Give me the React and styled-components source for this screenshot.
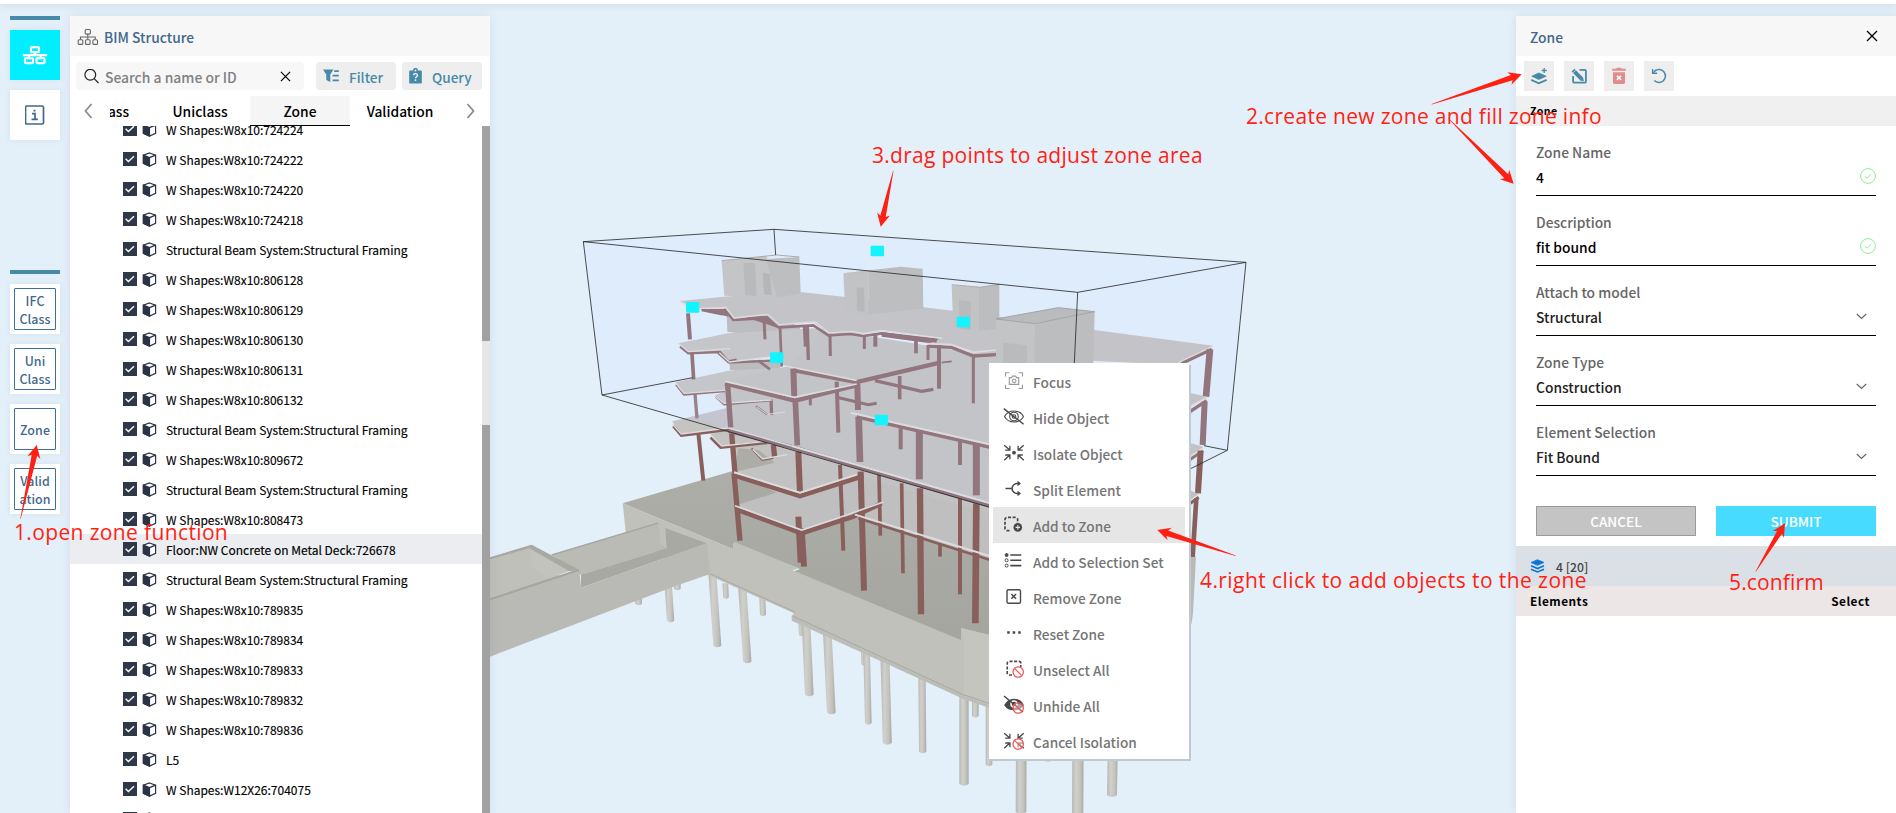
import React from "react";
import styled, { createGlobalStyle } from "styled-components";

const Global = createGlobalStyle`
  * { box-sizing: border-box; }
  body { margin: 0; overflow: hidden; }
`;

const ui = `"Noto Sans CJK SC", "Noto Sans", sans-serif`;

const Page = styled.div`
  position: relative;
  width: 1896px;
  height: 813px;
  overflow: hidden;
  background: #e4f0f9;
  font-family: ${ui};
  font-weight: 500;
  color: #000;
`;
const Scene = styled.svg`
  position: absolute;
  inset: 0;
`;
const TopStrip = styled.div`
  position: relative;
  height: 4px;
  background: #fff;
  box-shadow: 0 1px 8px rgba(60, 100, 140, 0.18);
`;
const Body = styled.div`
  position: relative;
  display: flex;
  height: 809px;
  padding-top: 12px;
`;

/* ---- left rail ---- */
const Rail = styled.nav`
  width: 70px;
  padding: 0 10px;
  display: flex;
  flex-direction: column;
  gap: 10px;
`;
const RailMark = styled.div`
  flex: none;
  height: 4px;
  background: #4689a8;
  margin-top: ${(p) => p.$top || 0}px;
`;
const RailButton = styled.button`
  flex: none;
  width: 50px;
  height: 50px;
  padding: 4px;
  border: 0;
  display: grid;
  place-items: center;
  background: ${(p) => (p.$active ? "#00eeff" : "#fff")};
  box-shadow: 0 0 6px rgba(90, 140, 170, 0.14);
`;
const RailLabel = styled.span`
  display: flex;
  align-items: center;
  justify-content: center;
  width: 42px;
  height: 42px;
  padding-top: 3px;
  border: 1px solid #3f6f98;
  border-radius: 1px;
  font: 500 12.4px/17.4px ${ui};
  letter-spacing: 0.1px;
  color: #41688c;
  white-space: pre;
`;

/* ---- panels ---- */
const Panel = styled.section`
  flex: none;
  width: ${(p) => p.$w}px;
  height: 797px;
  background: #fff;
  box-shadow: 0 0 10px rgba(60, 110, 150, 0.12);
  display: flex;
  flex-direction: column;
`;
const Viewport = styled.div`
  flex: 1;
`;
const PanelHeader = styled.header`
  flex: none;
  height: 40px;
  background: #f7f7f7;
  display: flex;
  align-items: center;
  padding: 1px 18px 0 ${(p) => p.$left}px;
  gap: 5px;
  font-size: 13.8px;
  color: #41688c;
  & > svg:last-child { margin-left: auto; margin-top: -1px; }
`;
const SearchRow = styled.div`
  flex: none;
  height: 40px;
  padding: 6px 8px 6px 6px;
  display: flex;
`;
const SearchBox = styled.div`
  flex: none;
  width: 228px;
  height: 28px;
  margin-right: 12px;
  border-radius: 4px;
  background: #f7f7f7;
  display: flex;
  align-items: center;
  padding: 0 13px 0 8px;
  gap: 6px;
  font-size: 13.9px;
  color: #808080;
  span { flex: 1; margin-top: 1px; }
`;
const ToolButton = styled.button`
  flex: none;
  width: 80px;
  height: 28px;
  border: 0;
  border-radius: 4px;
  background: #eee;
  display: flex;
  align-items: center;
  padding: 0 0 0 7px;
  gap: ${(p) => p.$gap || 10}px;
  font: 500 13.6px/20px ${ui};
  color: #4689a8;
  & + & { margin-left: 6px; }
  span { margin-top: 1px; }
`;
const TabBar = styled.div`
  flex: none;
  height: 30px;
  display: grid;
  grid-template-columns: 40px 340px 40px;
  align-items: center;
  svg { margin-left: 14px; }
  svg:last-child { margin-left: 16px; }
`;
const TabStrip = styled.div`
  height: 30px;
  overflow: hidden;
  display: flex;
  justify-content: flex-end;
`;
const Tab = styled.div`
  flex: none;
  width: 100px;
  height: 30px;
  display: grid;
  place-items: center;
  font-size: 13.8px;
  background: ${(p) => (p.$active ? "#f5f5f5" : "#fff")};
  border-bottom: 1px solid ${(p) => (p.$active ? "#000" : "transparent")};
`;
const TreeArea = styled.div`
  flex: 1;
  min-height: 0;
  display: grid;
  grid-template-columns: 412px 8px;
`;
const Tree = styled.div`
  height: 687px;
  overflow: hidden;
  display: flex;
  flex-direction: column;
  justify-content: flex-start;
`;
const TreeRow = styled.div`
  flex: none;
  height: 30px;
  &:first-child { margin-top: -12px; }
  display: flex;
  align-items: center;
  padding: 1px 0 0 53px;
  background: ${(p) => (p.$hover ? "#ecedf1" : "transparent")};
  font-size: 12px;
  font-weight: 400;
  -webkit-text-stroke: 0.15px currentColor;
  line-height: 20px;
  svg { flex: none; margin-bottom: 1px; }
  span { margin-left: 9px; margin-top: 1px; white-space: nowrap; }
`;
const ScrollTrack = styled.div`
  display: flex;
  flex-direction: column;
  justify-content: space-between;
  background: #e6e6e6;
`;
const ScrollThumb = styled.div`
  height: ${(p) => p.$h}px;
  background: #a1a1a1;
`;

/* ---- zone panel ---- */
const IconRow = styled.div`
  flex: none;
  height: 40px;
  padding: 5px 8px;
  display: flex;
  gap: 10px;
`;
const IconButton = styled.button`
  width: 30px;
  height: 30px;
  padding: 0;
  border: 0;
  background: #eee;
  display: grid;
  place-items: center;
`;
const SectionTitle = styled.div`
  flex: none;
  height: 30px;
  padding: 0 14px;
  background: #f0f0f0;
  font-size: 10.6px;
  font-weight: 700;
  line-height: 30px;
  letter-spacing: 0.4px;
`;
const Form = styled.div`
  flex: none;
  height: 420px;
  padding: 0 20px;
`;
const Field = styled.div`
  height: 70px;
  border-bottom: 1px solid #000;
  display: grid;
  grid-template: 24px 24px / 1fr 24px;
  align-items: center;
  padding-top: 14px;
  font-size: 13.8px;
  label { grid-column: 1 / 3; color: #666; }
  b { font-weight: 500; color: ${(p) => (p.$select ? "#222" : "#000")}; margin-top: 1px; }
  svg { justify-self: ${(p) => (p.$select ? "start" : "end")}; margin-left: 4px; margin-top: 0; }
`;
const FormActions = styled.div`
  display: flex;
  gap: 20px;
  margin-top: 30px;
`;
const ActionButton = styled.button`
  width: 160px;
  height: 30px;
  padding: 0;
  border: 1px solid ${(p) => (p.$primary ? "#47dcff" : "#999")};
  background: ${(p) => (p.$primary ? "#47dcff" : "#c4c4c4")};
  color: #fff;
  font: 500 13.6px/20px ${ui};
`;
const ZoneRow = styled.div`
  flex: none;
  height: 40px;
  background: #dbe0e7;
  display: flex;
  align-items: center;
  gap: 11px;
  padding: 0 14px;
  font-size: 12.2px;
  color: #444;
  span { margin-top: 1px; }
`;
const ElementsHead = styled.div`
  flex: none;
  height: 30px;
  background: #ece6e6;
  display: flex;
  justify-content: space-between;
  padding: 0 26px 0 14px;
  font-size: 11.8px;
  font-weight: 700;
  line-height: 30px;
  letter-spacing: 0.5px;
`;

/* ---- context menu and callouts ---- */
const Menu = styled.div`
  position: absolute;
  left: 989px;
  top: 363px;
  width: 200px;
  padding: 0 4px;
  background: #fff;
  box-shadow: 2px 2px 0 #bfc9d2;
`;
const MenuItem = styled.div`
  height: 36px;
  display: flex;
  align-items: center;
  gap: 8px;
  padding-left: 10px;
  background: ${(p) => (p.$hover ? "#e6e6e6" : "#fff")};
  font-size: 13.65px;
  color: #757575;
  svg { flex: none; overflow: visible; }
  span { margin-top: 1px; white-space: nowrap; }
`;
const Callout = styled.div`
  position: absolute;
  left: ${(p) => p.$x}px;
  top: ${(p) => p.$y}px;
  font: 400 21px/30px "Open Sans", "Noto Sans", sans-serif;
  letter-spacing: ${(p) => p.$ls || 0}px;
  color: #ff1f13;
  white-space: nowrap;
`;

/* ---- icons ---- */
const Icon = ({ w = 20, h, vb = "0 0 20 20", children, ...p }) => (
  <svg width={w} height={h || w} viewBox={vb} fill="none" stroke="currentColor" strokeWidth="1.4" {...p}>
    {children}
  </svg>
);
const Sitemap = () => (
  <Icon w={22} h={18} vb="0 0 22 18" stroke="#666" strokeWidth="1.1">
    <rect x="8.2" y="1.5" width="5.2" height="4.6" rx="1" />
    <rect x="1.2" y="11.8" width="4.6" height="4.6" rx="1" />
    <rect x="8.5" y="11.8" width="4.6" height="4.6" rx="1" />
    <rect x="15.9" y="11.8" width="4.6" height="4.6" rx="1" />
    <path d="M10.8 6.1v5.7M3.5 11.8V9h14.7v2.8" />
  </Icon>
);
const RailTree = () => (
  <Icon w={26} h={22} vb="0 -1 26 22" stroke="#fff" strokeWidth="2.2">
    <rect x="9" y="2.2" width="8" height="5" rx="1" />
    <rect x="3" y="13.2" width="8" height="5" rx="1" />
    <rect x="14.5" y="13.2" width="8" height="5" rx="1" />
    <path d="M0.8 10.2h24.4M13 7v3M7 10v3M18.6 10v3" />
  </Icon>
);
const InfoBox = () => (
  <Icon w={20} vb="0.5 0 20 20" stroke="#41688c" strokeWidth="1.7">
    <rect x="1" y="1" width="18" height="18" rx="1.5" />
    <path d="M7.5 8.6h3v5.4M7 14.4h6.4M9 5.6h2" />
  </Icon>
);
const Cross = ({ s = 12 }) => (
  <Icon w={s} vb="0 0 12 12" stroke="#000" strokeWidth={1.3}>
    <path d="M1 1l10 10M11 1L1 11" />
  </Icon>
);
const Search = () => (
  <Icon w={15} vb="0 0.5 15 15" stroke="#222" strokeWidth="1.2">
    <circle cx="6.3" cy="6.3" r="5.4" />
    <path d="M10.2 10.2l4.3 4.3" />
  </Icon>
);
const FilterIcon = () => (
  <Icon w={16} h={14} vb="0 0 16 14" stroke="none" fill="#4689a8">
    <path d="M0 .5h10.400L7.300 5.4V13L3.300 11V5.4z" />
    <path d="M11.2 1.2h4.6v1.700h-4.6zM9.6 5.8h6.2v1.700H9.6zM9.6 10.6h6.2v1.700H9.6z" />
  </Icon>
);
const QueryIcon = () => (
  <Icon w={13} h={16} vb="0 0 13 16" stroke="none" fill="#4689a8">
    <path d="M1.2 2.4H4a2.5 2.5 0 0 1 5 0h2.8c.6 0 1 .4 1 1V14.6c0 .6-.4 1-1 1H1.2c-.6 0-1-.4-1-1V3.400c0-.6.4-1 1-1z" />
    <path d="M4.5 7.2c.2-2.200 4-2 4 .1 0 1.500-2 1.300-2 3" stroke="#fff" strokeWidth="1.3" fill="none" />
    <rect x="5.800" y="11.400" width="1.500" height="1.500" fill="#fff" />
    <circle cx="6.500" cy="2.500" r=".9" fill="#fff" />
  </Icon>
);
const Chevron = ({ d }) => (
  <Icon w={9} h={16} vb="0 0 9 16" stroke="#8c8c8c" strokeWidth="1.800">
    <path d={d} />
  </Icon>
);
const Checkbox = () => (
  <Icon w={14} vb="0 0 14 14" stroke="#fff" strokeWidth="1.400">
    <rect width="14" height="14" fill="#2e3849" stroke="none" />
    <path d="M2.600 6.800l2.800 2.800 5.600-5.400" />
  </Icon>
);
const Cube = () => (
  <Icon w={15} vb="0 0 15 15" style={{ marginLeft: 5 }} stroke="#2b3346" strokeWidth="1.200">
    <path d="M7.500 1l6.100 2.100v8.300l-6.100 2.700-6.100-2.700V3.100z" fill="#fff" />
    <path d="M1.400 3.100l6.100 2.500v8.500l-6.100-2.700z" fill="#2b3346" />
    <path d="M7.500 5.600l6.100-2.500" strokeWidth="1.500" />
  </Icon>
);
const OkMark = () => (
  <Icon w={16} vb="0 0 16 16" stroke="#8deb96" strokeWidth="1">
    <circle cx="8" cy="8" r="7.400" />
    <path d="M4.800 8.200l2.200 2 4.200-4" />
  </Icon>
);
const Down = () => (
  <Icon w={11} h={7} vb="0 0 11 7" stroke="#666" strokeWidth="1.200">
    <path d="M.8 1l4.700 4.500L10.200 1" />
  </Icon>
);
const AddLayer = () => (
  <Icon w={18} vb="0 0 18 18" stroke="#4689a8" fill="#4689a8">
    <path d="M1.800 9.200L8.800 6l7.400 3.200-7.400 3.300z" strokeWidth=".8" />
    <path d="M1.200 12.900l7.600 3.400 7.800-3.400" fill="none" strokeWidth="1.900" />
    <path d="M14.200 1v5M11.700 3.500h5" strokeWidth="1.300" />
  </Icon>
);
const EditZone = () => (
  <Icon w={18} vb="0 0 18 18" stroke="#4689a8" strokeWidth="1.800">
    <path d="M9.500 2.800h5.200c.8 0 1.200.4 1.200 1.200v10.400c0 .9-.4 1.300-1.300 1.300H4.400c-.9 0-1.300-.4-1.300-1.300V9" />
    <path d="M3 3.200l8.600 8.600" strokeWidth="4" />
    <path d="M10.200 13.200l3.300 .700-.700-3.300z" fill="#4689a8" strokeWidth=".5" />
    <path d="M3 5.800l2.600-2.600" stroke="#eee" strokeWidth=".8" />
  </Icon>
);
const Trash = () => (
  <Icon w={16} h={18} vb="0 0 16 18" stroke="none" fill="#e08c8c">
    <path d="M1.200 1.800h4l1-1h3.600l1 1h4v2H1.200zM2 5.200h12v10.400c0 .9-.5 1.400-1.400 1.400H3.400c-.9 0-1.400-.5-1.400-1.400z" />
    <path d="M5.900 8.700l4.200 4.200M10.100 8.700l-4.200 4.200" stroke="#fff" strokeWidth="1.500" />
  </Icon>
);
const Undo = () => (
  <Icon w={18} vb="0 0 18 18" stroke="#4689a8" strokeWidth="1.500">
    <path d="M4.800 3.900a6.500 6.500 0 1 1-.5 9.600" />
    <path d="M2.600 2v4.200h4.600" strokeWidth="1.400" />
    <path d="M2.900 6L6 3" strokeWidth="1.200" />
  </Icon>
);
const Layers = () => (
  <Icon w={15} vb="0 0.700 15 15" stroke="#0b74d8" fill="#0b74d8">
    <path d="M1 4.200L7.500 1.400 14 4.200 7.500 7z" strokeWidth=".7" />
    <path d="M1 7.500l6.500 2.800L14 7.500M1 10.900l6.500 2.800 6.500-2.800" fill="none" strokeWidth="1.600" />
  </Icon>
);

const Ban = () => (
  <g stroke="#f05a5a" strokeWidth="1.300">
    <circle cx="15.200" cy="13" r="5.200" />
    <path d="M11.600 9.400l7.200 7.200" />
  </g>
);
const Arrows = () => (
  <path d="M1.200 2.200l5.300 4.600M6.900 2.800v4.300H2.200M20.800 2.200l-5.300 4.600M15.100 2.800v4.300h4.700M1.200 17.300l5.300-5M6.900 16.300V12H2.200M20.800 17.300l-5.300-5M15.100 16.300V12h4.700" strokeWidth="1.300" />
);
const menuIcons = {
  focus: (
    <g stroke="#999" strokeWidth="1.100">
      <path d="M2.500 5.500V1.800h4M15.500 1.800h4v3.700M19.500 13.800v3.700h-4M6.500 17.500h-4v-3.700" />
      <path d="M6.300 6.600h2.400l.8-1.500h3.200l.8 1.500h2.200v6.800H6.300z" />
      <circle cx="11.200" cy="9.800" r="1.800" />
    </g>
  ),
  hide: (
    <g strokeWidth="1.100">
      <path d="M1.500 9.500C5.500 2.200 16.500 2.200 20.500 9.500 16.500 16.800 5.500 16.800 1.500 9.500z" />
      <circle cx="11" cy="9.500" r="4.300" />
      <circle cx="11" cy="9.500" r="1.800" />
      <path d="M.8 1.600l19.800 15.600" strokeWidth="1.400" />
    </g>
  ),
  isolate: (
    <g>
      <Arrows />
      <circle cx="11" cy="9.700" r="1.900" fill="#484848" stroke="none" />
    </g>
  ),
  split: (
    <g strokeWidth="1.500">
      <path d="M2.500 9.500H9M17 4.500h-3c-2.500 0-5 2.500-5 5s2.500 5 5 5h3" />
      <path d="M14.500 1.800l3.500 2.700-3.500 2.700zM14.500 11.800l3.500 2.700-3.500 2.700z" fill="#484848" stroke="none" />
    </g>
  ),
  add: (
    <g>
      <path d="M6.500 15.600H4a2 2 0 0 1-2-2V4.400a2 2 0 0 1 2-2h8.600a2 2 0 0 1 2 2V8" strokeWidth="1.700" strokeDasharray="3 1.600" />
      <circle cx="14.800" cy="12.400" r="4.300" fill="#484848" stroke="none" />
      <path d="M14.800 10.200v4.400M12.600 12.400H17" stroke="#e6e6e6" strokeWidth="1.200" />
    </g>
  ),
  list: (
    <g strokeWidth="1.600">
      <path d="M7.300 4h11M7.300 9.200h11M7.300 14.600h11" />
      <circle cx="3.600" cy="4" r="1.500" fill="#484848" strokeWidth="1" />
      <circle cx="3.600" cy="9.300" r="1.500" strokeWidth="1" />
      <circle cx="3.600" cy="14.600" r="1.500" strokeWidth="1" />
    </g>
  ),
  remove: (
    <g strokeWidth="1.400">
      <rect x="4" y="2.700" width="13.500" height="13.500" rx="1.500" />
      <path d="M8.400 7.100l4.700 4.700M13.100 7.100l-4.700 4.700" />
    </g>
  ),
  reset: <path d="M4.200 9.500h2.500M9.700 9.500h2.500M15.200 9.500h2.500" strokeWidth="2.300" />,
  unselect: (
    <g>
      <path d="M9 16H6.200a2 2 0 0 1-2-2V4.400a2 2 0 0 1 2-2h9.600a2 2 0 0 1 2 2V8" strokeWidth="1.600" strokeDasharray="3 1.600" />
      <Ban />
    </g>
  ),
  unhide: (
    <g strokeWidth="1.500">
      <path d="M2 10C6 2.500 16 2.500 20 10 16 16 6 16 2 10z" fill="#484848" />
      <circle cx="11" cy="9" r="3" stroke="#fff" fill="#484848" />
      <path d="M1 1l19 16" />
      <circle cx="15.200" cy="13" r="4.500" fill="#fff" fillOpacity=".5" stroke="none" />
      <Ban />
    </g>
  ),
  cancel: (
    <g>
      <g strokeWidth="1.600"><Arrows /></g>
      <circle cx="15.200" cy="13" r="4.500" fill="#fff" fillOpacity=".5" stroke="none" />
      <Ban />
    </g>
  ),
};

/* ---- 3D model ---- */
const MAUVE = "#92757d";
const BRICK = "#895f5c";
const Poly = ({ p, f, ...r }) => <polygon points={p} fill={f} {...r} />;
const Beam = ({ p, c = MAUVE, w = 12 }) => (
  <polyline points={p} fill="none" stroke={c} strokeWidth={w} />
);
const Edge = ({ p, c = "#dcdcdf", w = 6 }) => (
  <polyline points={p} fill="none" stroke={c} strokeWidth={w} />
);
const piles = [
  [476, 1190, 476, 1215, 20], [592, 1150, 592, 1170, 20], [565, 1160, 572, 1266, 22],
  [736, 1150, 738, 1196, 17], [847, 1190, 849, 1248, 18], [697, 1120, 712, 1341, 24],
  [787, 1165, 802, 1389, 25], [961, 1260, 963, 1308, 12], [978, 1270, 988, 1488, 26], [1042, 1300, 1054, 1542, 26],
  [1148, 1350, 1149, 1396, 10], [1160, 1360, 1165, 1573, 20], [1215, 1380, 1222, 1633, 27],
  [1326, 1430, 1328, 1659, 22], [1452, 1480, 1452, 1756, 28], [1486, 1500, 1486, 1552, 20],
  [1527, 1510, 1527, 1698, 20], [1624, 1600, 1623, 1840, 32], [1704, 1600, 1704, 1685, 22],
  [1794, 1600, 1793, 1850, 34], [1899, 1600, 1896, 1790, 30],
];
const columnsLow = [
  [880, 735, 884, 772, 16],
  [762, 820, 780, 1022, 16],
  [955, 950, 962, 1088, 18], [965, 985, 972, 1100, 18],
  [1080, 795, 1090, 1052, 12], [1142, 815, 1152, 1172, 18], [1197, 825, 1201, 1007, 11],
  [1265, 850, 1269, 1120, 11], [1320, 865, 1323, 1243, 19], [1380, 1035, 1380, 1070, 11],
  [1440, 895, 1440, 1183, 12], [1489, 910, 1486, 1270, 20],
];
const handles = [[1192, 153], [638, 322], [1450, 366], [890, 473], [1204, 660]];

const Model = () => (
  <g transform="translate(480 200) scale(0.33333)">
    <defs>
      <linearGradient id="pile" x1="0" x2="1">
        <stop offset="0" stopColor="#b8b9b4" />
        <stop offset=".35" stopColor="#d0d0cc" />
        <stop offset=".7" stopColor="#c4c4bf" />
        <stop offset="1" stopColor="#a9aaa5" />
      </linearGradient>
      <linearGradient id="deck" x1="0" x2="0" y1="0" y2="1">
        <stop offset="0" stopColor="#aeafa9" />
        <stop offset="1" stopColor="#a4a59e" />
      </linearGradient>
    </defs>

    {piles.map(([x1, y1, x2, y2, w], i) => (
      <path
        key={i}
        fill="url(#pile)"
        d={`M${x1 - w / 2} ${y1}H${x1 + w / 2}L${x2 + w / 2} ${y2 - 4}Q${x2} ${y2 + 6} ${x2 - w / 2} ${y2 - 4}Z`}
      />
    ))}

    {/* foundation deck and retaining walls */}
    <Poly f="url(#deck)" p="428,910 750,815 1000,750 1600,750 1600,1330 1443,1290 1443,1325 938,1115 960,1107 760,1030 760,1048" />
    <Poly f="#c1c1bb" p="428,910 758,1047 762,1025 955,1105 938,1111 1443,1320 1443,1284 1600,1322 1600,1545 1450,1496 935,1262 935,1248 942,1240 686,1126 560,1080 437,995" />
    <Poly f="#c5c5c0" p="1443,1284 1600,1322 1600,1545 1452,1496 1452,1320" />
    <Edge p="688,1120 945,1236" c="#a7a8a2" w={3} />
    <Edge p="938,1248 1450,1484 1600,1535" c="#a7a8a2" w={3} />
    <Edge p="940,1256 1450,1492 1600,1545" c="#bcbdb7" w={8} />
    <Poly f="#c0c0ba" p="30,1073 155,1035 150,1045 240,1130 30,1202" />
    <Poly f="#c3c3bd" p="150,1045 270,1112 205,1136 157,1102" />
    <Poly f="#babbb5" p="215,1064 535,970 555,985 560,1045 303,1125" />
    <Poly f="#a8a9a3" p="30,1072 155,1034 298,1110 268,1114 148,1045 30,1078" />
    <Edge p="215,1065 535,969" c="#a7a8a2" w={4} />
    <Poly f="#c1c1bb" p="535,972 556,982 560,1045 541,1030" />
    <Poly f="#a8a9a3" p="556,984 680,1030 303,1163 303,1124 560,1045" />
    <Poly f="#b9bab5" p="30,1200 298,1110 303,1163 680,1030 690,1122 580,1160 30,1370" />
    <Edge p="30,1198 296,1110" c="#a4a59f" w={6} />

    {/* zone volume */}
    <Poly f="#dfecfb" p="310,125 882,88 2298,187 2242,751 1770,990 366,585" />

    {/* roof plant rooms */}
    <Poly f="#bcbdc0" p="740,340 870,340 960,380 960,408 832,408 742,395" />
    <Poly f="#babcbe" p="748,480 900,480 900,515 810,520 750,510" />
    <Poly f="#a9aaa4" p="775,760 890,755 890,875 775,908" />

    {/* left terraces */}
    <Poly f="#c5c6ca" p="595,430 745,400 1000,385 1548,470 1548,560 920,500 868,470 747,488 715,456 625,460" />
    <Poly f="#c5c6ca" p="587,547 745,512 950,500 1100,560 735,572 612,582" />
    <Poly f="#c6c7cf" p="704,586 735,575 870,600 730,612" />
    <Poly f="#c4c5d0" p="577,664 750,622 1000,600 960,745 745,686 602,702" />
    <Poly f="#c4c4c1" p="577,664 655,658 745,686 602,702" />
    <Poly f="#c3c3c1" p="692,702 745,690 860,725 722,740" />
    <Poly f="#c2c2c0" p="815,745 890,738 920,765 848,778" />

    {/* glazed floor plates inside the zone */}
    <Poly f="#c3c4c8" p="735,545 920,500 1000,430 1020,385 1548,470 2130,520 2130,900 1600,945 1527,918 950,742 745,690" />
    {/* floors below the zone */}
    <Poly f="#c0bfc0" p="762,815 885,785 960,760 1140,800 1600,940 1600,1100 1125,945 1205,905 965,990 765,917 890,878" />
    <Poly f="#c2c2c3" p="745,690 950,742 1600,935 1600,960 1140,830 960,888 765,820" />
    <Poly f="#acada7" p="775,745 835,750 885,788 765,815" />

    {columnsLow.map(([x1, y1, x2, y2, w], i) => (
      <Beam key={i} p={`${x1},${y1} ${x2},${y2}`} w={w} c={BRICK} />
    ))}
    <Beam p="755,700 765,820" c={BRICK} w={16} />
    <Beam p="955,755 960,880" c={BRICK} w={18} />
    <Beam p="762,826 960,888 1150,828" c={BRICK} w={14} />
    <Beam p="768,928 965,1000 1120,950 1205,910" c={BRICK} w={14} />
    <Edge p="762,817 960,878 1130,824" />
    <Edge p="765,917 965,990 1080,952 1210,906" w={5} />
    <Beam p="1135,955 1600,1102" c={BRICK} w={8} />
    <Edge p="1125,944 1600,1090" />
    <Beam p="580,678 604,706 690,696 750,688" c={BRICK} w={9} />
    <Beam p="655,700 670,842" c={BRICK} w={12} />
    <Beam p="692,712 722,742 862,728" c={BRICK} w={9} />
    <Beam p="815,745 847,780 880,774" c={BRICK} w={6} />
    <Edge p="577,672 604,702 745,684" w={4} />
    <Edge p="692,705 725,738 860,724" w={4} />
    <Edge p="818,748 848,777 922,764" w={4} />

    {/* inner level beams */}
    <Beam p="624,340 630,418" w={12} />
    <Beam p="636,460 641,538" w={11} />
    <Beam p="645,582 651,655" w={10} c="#9a828d" />
    <Beam p="873,598 875,645" w={10} />
    <Beam p="852,355 855,418" w={9} />
    <Beam p="900,378 905,500" w={8} />
    <Beam p="973,380 976,440" w={9} />
    <Beam p="982,380 985,480" w={10} />
    <Beam p="1050,400 1051,468" w={9} />
    <Beam p="1153,405 1153,447" w={9} />
    <Beam p="1186,400 1186,440" w={12} />
    <Beam p="1308,420 1308,460" w={11} />
    <Beam p="1344,435 1344,480" w={9} />
    <Beam p="1377,440 1377,566" w={12} />
    <Beam p="1480,465 1480,610" w={9} />
    <Beam p="991,590 991,616" w={9} />
    <Beam p="1259,528 1259,598" w={11} />
    <Beam p="1070,545 1075,698" w={12} />
    <Beam p="1185,542 1325,574 1360,568" w={10} />
    <Beam p="1070,592 1165,614 1190,610" w={9} />
    <Beam p="1385,488 1415,484" w={5} />
    <Beam p="600,440 625,460 720,456 748,488 870,482" w={7} />
    <Beam p="715,458 745,485 770,480" w={9} />
    <Beam p="588,554 612,584 735,574" w={6} />
    <Beam p="706,590 732,614 870,602" w={5} />
    <Beam p="828,618 862,644" w={6} />
    <Beam p="835,482 870,508" w={8} />
    <Edge p="595,430 625,455 750,446" w={4} />
    <Edge p="718,458 748,486 880,470" w={4} />
    <Edge p="587,549 612,580 735,571" w={4} />
    <Edge p="704,588 732,610 875,600" w={4} />
    <Edge p="830,620 862,643 915,636" w={3} />

    {/* main roof slab */}
    <Poly f="#c4c4c8" p="600,303 730,290 955,275 1090,290 1330,322 1420,332 1843,390 2200,437 2100,494 1548,470 1480,460 1415,436 1340,432 1385,415 1210,393 1150,402 1045,400 1000,367 897,376 862,345 762,355 735,324 640,326" />
    <Poly f="#dfecfb" p="640,334 732,350 742,398 642,420" />
    <Beam p="665,330 725,342 735,330 760,360 840,355 897,382 1000,376 1045,406 1110,402 1150,408 1205,400 1370,424" w={8} />
    <Poly f={MAUVE} p="660,328 735,326 745,350" />
    <Poly f={MAUVE} p="790,350 862,348 895,378 890,382" />
    <Poly f={MAUVE} p="1205,396 1380,416 1350,430 1205,410" />
    <Edge p="600,304 640,326 738,322 762,354 864,343 897,374 1005,365 1047,399 1115,394 1150,400 1205,391 1388,415" w={4} />
    <Beam p="1345,438 1415,442 1480,468 1548,464" w={10} />
    <Edge p="1338,431 1415,434 1480,457 1548,450" w={5} />

    {/* middle roof terrace */}
    <Beam p="940,510 1130,546 1380,488" w={13} />
    <Edge p="916,498 1130,541" w={5} />
    <Beam p="735,550 945,602 1135,555" w={13} />
    <Beam p="940,506 943,596" w={18} />
    <Beam p="743,555 752,682" w={16} />
    <Beam p="946,604 952,736" w={17} />
    <Beam p="1132,550 1134,630" w={18} />
    <Beam p="1136,650 1140,786" w={20} />
    <Beam p="1262,685 1262,748" w={12} />
    <Beam p="1318,695 1318,838" w={21} />
    <Beam p="1440,725 1440,795" w={12} />
    <Beam p="1489,735 1489,886" w={21} />
    <Beam p="1130,650 1600,757" w={12} />
    <Edge p="735,544 943,592 1130,552" w={5} />
    <Edge p="1112,638 1600,749" w={6} />
    <Beam p="745,692 950,745 1600,938" w={13} c="#8d747e" />
    <Edge p="745,684 935,738" w={4} />
    <Edge p="935,738 1600,930" w={6} />

    {/* plant room boxes */}
    <Poly f="#c4c5c7" p="725,182 860,168 890,293 733,287" />
    <Poly f="#bcbec0" p="858,177 958,171 962,280 890,293" />
    <Poly f="#b8babc" p="790,190 825,188 830,288 796,286" />
    <Poly f="#b4b6b8" p="848,218 870,222 875,286 852,283" />
    <Edge p="725,182 890,165 958,171" c="#aaabad" w={3} />
    <Poly f="#c2c3c5" p="1090,220 1165,212 1166,345 1096,336" />
    <Poly f="#bcbebf" p="1165,213 1328,206 1330,325 1166,345" />
    <Poly f="#b6b8ba" p="1130,262 1152,264 1154,336 1131,332" />
    <Poly f="#b9bbbd" p="1090,220 1262,200 1328,207 1165,215" />
    <Poly f="#c2c3c5" p="1415,256 1497,260 1497,392 1420,386" />
    <Poly f="#bbbdbf" p="1497,262 1558,253 1558,385 1497,393" />
    <Poly f="#b8babc" p="1437,300 1472,304 1472,390 1439,386" />
    <Edge p="1415,254 1500,262 1558,253" c="#aaabad" w={3} />
    <Poly f="#b9bbbd" p="1548,357 1735,323 1844,335 1665,371" />
    <Poly f="#c3c4c6" p="1548,357 1665,371 1662,560 1548,560" />
    <Poly f="#bbbdbf" p="1665,371 1844,335 1838,560 1662,560" />
    <Poly f="#b9bbbd" p="1569,428 1641,436 1641,560 1569,560" />
    <Edge p="1548,357 1735,323 1844,335 1665,371 1548,357" c="#a3a4a6" w={3} />

    {/* right-hand bays */}
    <Beam p="2104,490 2195,447" w={11} />
    <Edge p="2095,488 2198,439" w={4} />
    <Beam p="2190,448 2178,590" w={20} />
    <Poly f="#c3c3c7" p="2128,578 2182,590 2128,622" />
    <Beam p="2128,636 2180,602" w={10} />
    <Edge p="2128,620 2182,592" w={5} />
    <Beam p="2174,605 2168,735" w={18} />
    <Poly f="#c3c3c7" p="2128,728 2170,740 2128,772" />
    <Beam p="2128,780 2168,752" w={10} />
    <Edge p="2128,771 2170,744" w={5} />
    <Beam p="2162,752 2154,880" w={18} c={BRICK} />
    <Poly f="#c1c1c0" p="2128,870 2156,882 2128,902" />
    <Beam p="2128,912 2156,892" c={BRICK} w={9} />
    <Beam p="2149,895 2138,1072" c={BRICK} w={14} />
    <Poly f="#b9bab5" p="2128,1072 2148,1070 2139,1240 2136,1262 2128,1300" />

    <g stroke="#222" strokeWidth="2.4" fill="none">
      <path d="M310 125L882 88L2298 187L2242 751M2298 187L1793 277L310 125L366 585L1530 922M1793 277L1783 490M882 88L887 165M366 585L638 533M2242 751L2128 808M2242 751L2172 737" />
    </g>
    {handles.map(([x, y]) => (
      <rect key={x} x={x - 20} y={y - 16} width="40" height="32" rx="3" fill="#12f4ff" />
    ))}
  </g>
);

/* tapered arrow running from a thin tail to a barbed head */
const Arrow = ({ from: [x1, y1], to: [x2, y2] }) => {
  const len = Math.hypot(x2 - x1, y2 - y1);
  const ux = (x2 - x1) / len;
  const uy = (y2 - y1) / len;
  const at = (back, side) => `${x2 - ux * back - uy * side},${y2 - uy * back + ux * side}`;
  return (
    <polygon
      fill="#ff1f13"
      points={[at(0, 0), at(13, 6.6), at(10.5, 2.8), at(len, 0.2), at(len, -0.2), at(10.5, -2.8), at(13, -6.6)].join(" ")}
    />
  );
};
const arrows = [
  [[20.5, 519], [36.7, 445]],
  [[1431.7, 104.3], [1521.7, 74.3]],
  [[1448.3, 118.3], [1513.7, 183.7]],
  [[893.3, 170.7], [880.7, 226.7]],
  [[1235.7, 555.7], [1157.3, 530]],
  [[1755.7, 571.7], [1785, 523.3]],
];

const beam = "Structural Beam System:Structural Framing";
const w8 = (n) => `W Shapes:W8x10:${n}`;
const rows = [
  w8(724224), w8(724222), w8(724220), w8(724218), beam, w8(806128), w8(806129), w8(806130),
  w8(806131), w8(806132), beam, w8(809672), beam, w8(808473),
  "Floor:NW Concrete on Metal Deck:726678", beam, w8(789835), w8(789834), w8(789833),
  w8(789832), w8(789836), "L5", "W Shapes:W12X26:704075", "",
];
const menu = [
  ["focus", "Focus"], ["hide", "Hide Object"], ["isolate", "Isolate Object"], ["split", "Split Element"],
  ["add", "Add to Zone"], ["list", "Add to Selection Set"], ["remove", "Remove Zone"], ["reset", "Reset Zone"],
  ["unselect", "Unselect All"], ["unhide", "Unhide All"], ["cancel", "Cancel Isolation"],
];
const fields = [
  ["Zone Name", "4"], ["Description", "fit bound"], ["Attach to model", "Structural", true],
  ["Zone Type", "Construction", true], ["Element Selection", "Fit Bound", true],
];

export default function App() {
  return (
    <Page>
      <Global />
      <Scene width="1896" height="813"><Model /></Scene>
      <TopStrip />
      <Body>
        <Rail>
          <RailMark />
          <RailButton $active><RailTree /></RailButton>
          <RailButton><InfoBox /></RailButton>
          <RailMark $top={120} />
          {["IFC\nClass", "Uni\nClass", "Zone", "Valid\nation"].map((t) => (
            <RailButton key={t}><RailLabel>{t}</RailLabel></RailButton>
          ))}
        </Rail>
        <Panel $w={420}>
          <PanelHeader $left={7}><Sitemap /><div>BIM Structure</div></PanelHeader>
          <SearchRow>
            <SearchBox><Search /><span>Search a name or ID</span><Cross s={11} /></SearchBox>
            <ToolButton><FilterIcon /><span>Filter</span></ToolButton>
            <ToolButton><QueryIcon /><span>Query</span></ToolButton>
          </SearchRow>
          <TabBar>
            <Chevron d="M7.500 1L1.500 8l6 7" />
            <TabStrip>
              <Tab>IFC Class</Tab><Tab>Uniclass</Tab><Tab $active>Zone</Tab><Tab>Validation</Tab>
            </TabStrip>
            <Chevron d="M1.500 1l6 7-6 7" />
          </TabBar>
          <TreeArea>
            <Tree>
              {rows.map((t, i) => (
                <TreeRow key={i} $hover={i === 14}><Checkbox /><Cube /><span>{t}</span></TreeRow>
              ))}
            </Tree>
            <ScrollTrack><ScrollThumb $h={215} /><ScrollThumb $h={388} /></ScrollTrack>
          </TreeArea>
        </Panel>
        <Viewport />
        <Panel $w={380}>
          <PanelHeader $left={14}><div>Zone</div><Cross /></PanelHeader>
          <IconRow>
            <IconButton><AddLayer /></IconButton>
            <IconButton><EditZone /></IconButton>
            <IconButton><Trash /></IconButton>
            <IconButton><Undo /></IconButton>
          </IconRow>
          <SectionTitle>Zone</SectionTitle>
          <Form>
            {fields.map(([l, v, s]) => (
              <Field key={l} $select={s}><label>{l}</label><b>{v}</b>{s ? <Down /> : <OkMark />}</Field>
            ))}
            <FormActions><ActionButton>CANCEL</ActionButton><ActionButton $primary>SUBMIT</ActionButton></FormActions>
          </Form>
          <ZoneRow><Layers /><span>4 [20]</span></ZoneRow>
          <ElementsHead><div>Elements</div><div>Select</div></ElementsHead>
        </Panel>
      </Body>
      <Menu>
        {menu.map(([k, t]) => (
          <MenuItem key={k} $hover={k === "add"}>
            <Icon w={22} h={20} vb="0 0 22 20" stroke="#484848">{menuIcons[k]}</Icon>
            <span>{t}</span>
          </MenuItem>
        ))}
      </Menu>
      <Scene width="1896" height="813">
        {arrows.map(([a, b], i) => <Arrow key={i} from={a} to={b} />)}
      </Scene>
      <Callout $x={14} $y={517} $ls={0.36}>1.open zone function</Callout>
      <Callout $x={1246} $y={101} $ls={0.3}>2.create new zone and fill zone info</Callout>
      <Callout $x={872} $y={140} $ls={0.28}>3.drag points to adjust zone area</Callout>
      <Callout $x={1200} $y={565} $ls={0.42}>4.right click to add objects to the zone</Callout>
      <Callout $x={1729} $y={567} $ls={0.15}>5.confirm</Callout>
    </Page>
  );
}
